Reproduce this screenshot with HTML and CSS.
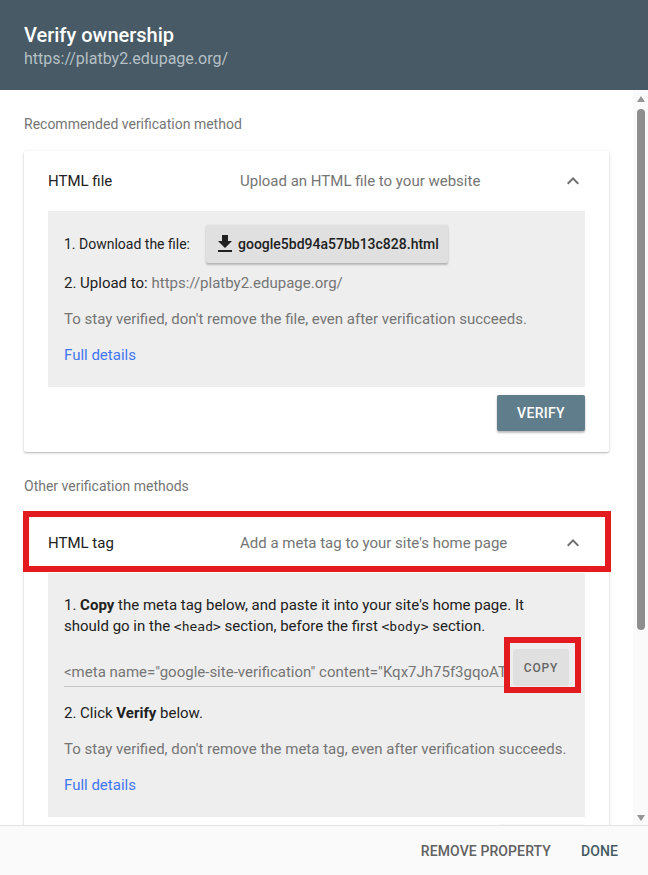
FILE: index.html
```html
<!DOCTYPE html>
<html lang="en">
<head>
<meta charset="utf-8">
<title>Verify ownership</title>
<link rel="stylesheet" href="styles.css">
</head>
<body>
<div class="dialog">
  <header class="dlg-header">
    <div class="dlg-title">Verify ownership</div>
    <div class="dlg-sub">https://platby2.edupage.org/</div>
  </header>

  <div class="dlg-body">
    <div class="scroll-content">
      <div class="section-label">Recommended verification method</div>

      <div class="card">
        <div class="card-head">
          <div class="card-title">HTML file</div>
          <div class="card-desc">Upload an HTML file to your website</div>
          <svg class="chev" viewBox="0 0 24 24" width="24" height="24"><path d="M12 8l-6 6 1.41 1.41L12 10.83l4.59 4.58L18 14z"/></svg>
        </div>
        <div class="panel">
          <div class="dl-row">
            <span>1. Download the file:</span>
            <button class="dl-btn">
              <svg viewBox="0 0 24 24" width="24" height="24"><path d="M19 9h-4V3H9v6H5l7 7 7-7zM5 18v2h14v-2H5z"/></svg>
              <span>google5bd94a57bb13c828.html</span>
            </button>
          </div>
          <p class="line first">2. Upload to: <span class="muted">https://platby2.edupage.org/</span></p>
          <p class="line muted">To stay verified, don't remove the file, even after verification succeeds.</p>
          <p class="line"><a class="link" href="#">Full details</a></p>
        </div>
        <div class="card-actions">
          <button class="verify-btn">VERIFY</button>
        </div>
      </div>

      <div class="section-label second">Other verification methods</div>

      <div class="card">
        <div class="card-head marked">
          <div class="card-title">HTML tag</div>
          <div class="card-desc">Add a meta tag to your site's home page</div>
          <svg class="chev" viewBox="0 0 24 24" width="24" height="24"><path d="M12 8l-6 6 1.41 1.41L12 10.83l4.59 4.58L18 14z"/></svg>
        </div>
        <div class="panel panel-tag">
          <p class="para">1. <b>Copy</b> the meta tag below, and paste it into your site's home page. It should go in the <code>&lt;head&gt;</code> section, before the first <code>&lt;body&gt;</code> section.</p>
          <div class="meta-row">
            <div class="meta-field">&lt;meta name="google-site-verification" content="Kqx7Jh75f3gqoATz9mVdXc2pLrW1uYbN0eHsQ4iFkM8" /&gt;</div>
            <div class="copy-wrap">
              <button class="copy-btn">COPY</button>
            </div>
          </div>
          <p class="line click">2. Click <b>Verify</b> below.</p>
          <p class="line muted">To stay verified, don't remove the meta tag, even after verification succeeds.</p>
          <p class="line"><a class="link" href="#">Full details</a></p>
        </div>
        <div class="card-actions">
          <button class="verify-btn">VERIFY</button>
        </div>
      </div>
    </div>

    <div class="scrollbar">
      <div class="arrow-up"></div>
      <div class="thumb"></div>
      <div class="arrow-down"></div>
    </div>
  </div>

  <footer class="dlg-footer">
    <button class="text-btn">REMOVE PROPERTY</button>
    <button class="text-btn primary">DONE</button>
  </footer>
</div>
</body>
</html>
```

FILE: styles.css
```css
* { box-sizing: border-box; }
html, body { margin: 0; padding: 0; }
body {
  font-family: Roboto, "Noto Sans", Arial, sans-serif;
  color: #212121;
  background: #fff;
}
button { font-family: inherit; border: none; cursor: pointer; }

.dialog {
  width: 648px;
  height: 875px;
  display: flex;
  flex-direction: column;
  overflow: hidden;
}

.dlg-header {
  height: 90px;
  flex: none;
  background: #475a65;
  padding: 23px 24px 0;
}
.dlg-title {
  color: #fff;
  font-size: 20px;
  font-weight: 500;
  line-height: 25px;
}
.dlg-sub {
  margin-top: 1px;
  color: #b6c0c6;
  font-size: 16px;
  line-height: 20px;
}

.dlg-body {
  flex: 1;
  min-height: 0;
  display: flex;
}
.scroll-content {
  flex: 1;
  min-width: 0;
  overflow: hidden;
  padding: 24px 24px 0;
}
.section-label {
  font-size: 14px;
  line-height: 20px;
  color: #757575;
}
.section-label.second { margin-top: 24px; }

.card {
  margin-top: 17px;
  background: #fff;
  border-radius: 2px;
  box-shadow: 0 1px 3px rgba(0,0,0,0.22), 0 1px 1px rgba(0,0,0,0.10);
  padding: 0 24px 21px;
}
.card-head {
  position: relative;
  height: 60px;
  display: flex;
  align-items: center;
  font-size: 15px;
}
.card-title {
  width: 192px;
  flex: none;
  color: #212121;
}
.card-desc {
  flex: 1;
  color: #757575;
}
.chev { fill: #6f6f6f; flex: none; }

.card-head.marked::after {
  content: "";
  position: absolute;
  left: -25px;
  right: -26px;
  top: -2px;
  bottom: 1px;
  border: 6px solid #e41b1e;
  pointer-events: none;
}

.panel {
  background: #eeeeee;
  padding: 14px 16px 22px;
  font-size: 15px;
  line-height: 20px;
}
.dl-row {
  display: flex;
  align-items: center;
  height: 38px;
  font-size: 14px;
}
.dl-btn {
  margin-left: 16px;
  height: 38px;
  display: flex;
  align-items: center;
  gap: 1px;
  padding: 0 9px 0 7px;
  background: #e0e0e0;
  border-radius: 2px;
  box-shadow: 0 2px 2px rgba(0,0,0,0.22), 0 0 2px rgba(0,0,0,0.10);
  font-size: 14px;
  font-weight: 500;
  color: #212121;
}
.dl-btn svg { fill: #212121; }

.line { margin: 16px 0 0; }
.line.first { margin-top: 10px; }
.muted { color: #757575; }
.link { color: #4277f2; text-decoration: none; }

.card-actions {
  display: flex;
  justify-content: flex-end;
  margin-top: 8px;
}
.verify-btn {
  height: 36px;
  width: 88px;
  background: #607d8b;
  color: #fff;
  font-size: 14px;
  font-weight: 500;
  letter-spacing: 0.3px;
  border-radius: 2px;
  box-shadow: 0 2px 2px rgba(0,0,0,0.24), 0 0 2px rgba(0,0,0,0.12);
}

.panel-tag { padding-top: 22px; }
.para { margin: 0; line-height: 21px; }
code {
  font-family: "DejaVu Sans Mono", monospace;
  font-size: 13px;
}
.meta-row {
  display: flex;
  align-items: center;
  margin-top: 12px;
  height: 37px;
}
.meta-field {
  flex: 1;
  min-width: 0;
  white-space: nowrap;
  overflow: hidden;
  color: #757575;
  border-bottom: 1px solid #c4c4c4;
  padding-top: 6px;
  padding-bottom: 4px;
  margin-top: 7px;
}
.copy-wrap {
  position: relative;
  margin-left: 8px;
  flex: none;
}
.copy-wrap::after {
  content: "";
  position: absolute;
  left: -9px;
  right: -12px;
  top: -12px;
  bottom: -7px;
  border: 6px solid #e41b1e;
  pointer-events: none;
}
.copy-btn {
  display: block;
  width: 56px;
  height: 37px;
  background: #e0e0e0;
  border-radius: 3px;
  color: #666;
  font-size: 12px;
  font-weight: 500;
  letter-spacing: 0.8px;
}
.line.click { margin-top: 17px; }

.scrollbar {
  width: 15px;
  flex: none;
  background: #fafafa;
  display: flex;
  flex-direction: column;
  align-items: center;
}
.arrow-up {
  margin-top: 6px;
  width: 0; height: 0;
  border-left: 4px solid transparent;
  border-right: 4px solid transparent;
  border-bottom: 6px solid #959595;
}
.thumb {
  margin-top: 7px;
  width: 8px;
  height: 521px;
  background: #8e8e8e;
  border-radius: 4px;
}
.arrow-down {
  margin-top: auto;
  margin-bottom: 4px;
  width: 0; height: 0;
  border-left: 4px solid transparent;
  border-right: 4px solid transparent;
  border-top: 6px solid #959595;
}

.dlg-footer {
  height: 50px;
  flex: none;
  background: #fafafa;
  border-top: 1px solid #e3e3e3;
  display: flex;
  justify-content: flex-end;
  align-items: center;
  gap: 14px;
  padding-right: 22px;
}
.text-btn {
  background: transparent;
  height: 36px;
  padding: 0 8px;
  font-size: 14px;
  font-weight: 500;
  color: #616161;
  letter-spacing: 0.1px;
}
.text-btn.primary { color: #455a64; }
```
